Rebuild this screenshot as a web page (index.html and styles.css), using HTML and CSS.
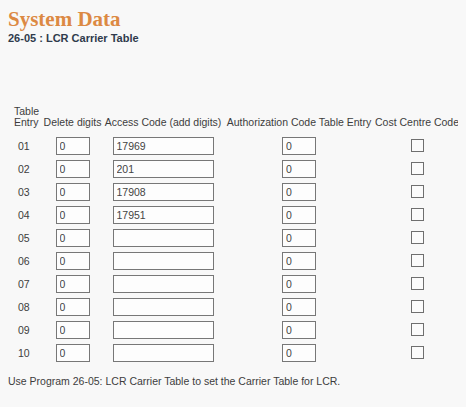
FILE: index.html
```html
<!DOCTYPE html>
<html lang="en">
<head>
    <meta charset="UTF-8">
    <title>System Data - 26-05</title>
    <link rel="stylesheet" href="styles.css">
</head>
<body>

<h1>System Data</h1>
<div class="subtitle">26-05 : LCR Carrier Table</div>

<table class="carrier-table">
    <colgroup>
        <col class="col-entry">
        <col class="col-delete">
        <col class="col-access">
        <col class="col-auth">
        <col class="col-cost">
    </colgroup>
    <thead>
        <tr>
            <th class="entry-head">Table<br>Entry</th>
            <th>Delete digits</th>
            <th>Access Code (add digits)</th>
            <th>Authorization Code Table Entry</th>
            <th>Cost Centre Code</th>
        </tr>
    </thead>
    <tbody>
        <tr>
            <td class="num">01</td>
            <td><input type="text" class="short" value="0"></td>
            <td><input type="text" class="long" value="17969"></td>
            <td><input type="text" class="short" value="0"></td>
            <td><span class="check"></span></td>
        </tr>
        <tr>
            <td class="num">02</td>
            <td><input type="text" class="short" value="0"></td>
            <td><input type="text" class="long" value="201"></td>
            <td><input type="text" class="short" value="0"></td>
            <td><span class="check"></span></td>
        </tr>
        <tr>
            <td class="num">03</td>
            <td><input type="text" class="short" value="0"></td>
            <td><input type="text" class="long" value="17908"></td>
            <td><input type="text" class="short" value="0"></td>
            <td><span class="check"></span></td>
        </tr>
        <tr>
            <td class="num">04</td>
            <td><input type="text" class="short" value="0"></td>
            <td><input type="text" class="long" value="17951"></td>
            <td><input type="text" class="short" value="0"></td>
            <td><span class="check"></span></td>
        </tr>
        <tr>
            <td class="num">05</td>
            <td><input type="text" class="short" value="0"></td>
            <td><input type="text" class="long" value=""></td>
            <td><input type="text" class="short" value="0"></td>
            <td><span class="check"></span></td>
        </tr>
        <tr>
            <td class="num">06</td>
            <td><input type="text" class="short" value="0"></td>
            <td><input type="text" class="long" value=""></td>
            <td><input type="text" class="short" value="0"></td>
            <td><span class="check"></span></td>
        </tr>
        <tr>
            <td class="num">07</td>
            <td><input type="text" class="short" value="0"></td>
            <td><input type="text" class="long" value=""></td>
            <td><input type="text" class="short" value="0"></td>
            <td><span class="check"></span></td>
        </tr>
        <tr>
            <td class="num">08</td>
            <td><input type="text" class="short" value="0"></td>
            <td><input type="text" class="long" value=""></td>
            <td><input type="text" class="short" value="0"></td>
            <td><span class="check"></span></td>
        </tr>
        <tr>
            <td class="num">09</td>
            <td><input type="text" class="short" value="0"></td>
            <td><input type="text" class="long" value=""></td>
            <td><input type="text" class="short" value="0"></td>
            <td><span class="check"></span></td>
        </tr>
        <tr>
            <td class="num">10</td>
            <td><input type="text" class="short" value="0"></td>
            <td><input type="text" class="long" value=""></td>
            <td><input type="text" class="short" value="0"></td>
            <td><span class="check"></span></td>
        </tr>
    </tbody>
</table>

<p class="help">Use Program 26-05: LCR Carrier Table to set the Carrier Table for LCR.</p>

</body>
</html>
```

FILE: styles.css
```css
body {
    margin: 8px;
    background-color: #f8f8f8;
    color: #3d3d3d;
    font-family: "Liberation Sans", Arial, sans-serif;
    font-size: 10.5px;
}
h1 {
    margin: 0;
    font-family: "Liberation Serif", "Times New Roman", serif;
    font-size: 21px;
    line-height: 22px;
    font-weight: bold;
    color: #dc8943;
}
.subtitle {
    margin-top: 1px;
    font-size: 11px;
    line-height: 14px;
    font-weight: bold;
    color: #2f3b4c;
}
.carrier-table {
    margin-top: 61px;
    width: 452px;
    table-layout: fixed;
    border-collapse: collapse;
}
.col-entry {
    width: 35px;
}
.col-delete {
    width: 59px;
}
.col-access {
    width: 122px;
}
.col-auth {
    width: 150px;
}
.col-cost {
    width: 86px;
}
.carrier-table th {
    font-weight: normal;
    line-height: 11px;
    padding: 0 0 6px 0;
    vertical-align: bottom;
    text-align: center;
    white-space: nowrap;
}
.carrier-table th.entry-head {
    text-align: left;
    padding-left: 6px;
}
.carrier-table td {
    height: 23px;
    padding: 0;
    text-align: center;
    vertical-align: middle;
}
.carrier-table td.num {
    text-align: left;
    padding-left: 10px;
}
input[type="text"] {
    display: inline-block;
    box-sizing: border-box;
    height: 18px;
    margin: 0;
    padding: 0 3px;
    border: 1px solid #777;
    border-radius: 0;
    background-color: #fdfdfd;
    color: #444;
    font-family: "Liberation Sans", Arial, sans-serif;
    font-size: 10.5px;
    vertical-align: middle;
}
input.short {
    width: 34px;
}
input.long {
    width: 101px;
}
.check {
    display: inline-block;
    box-sizing: border-box;
    width: 13px;
    height: 13px;
    border: 1px solid #6f6f6f;
    background-color: #fbfbfb;
    vertical-align: middle;
}
.help {
    margin: 11px 0 0 0;
    font-size: 10.5px;
    line-height: 13px;
}
```
